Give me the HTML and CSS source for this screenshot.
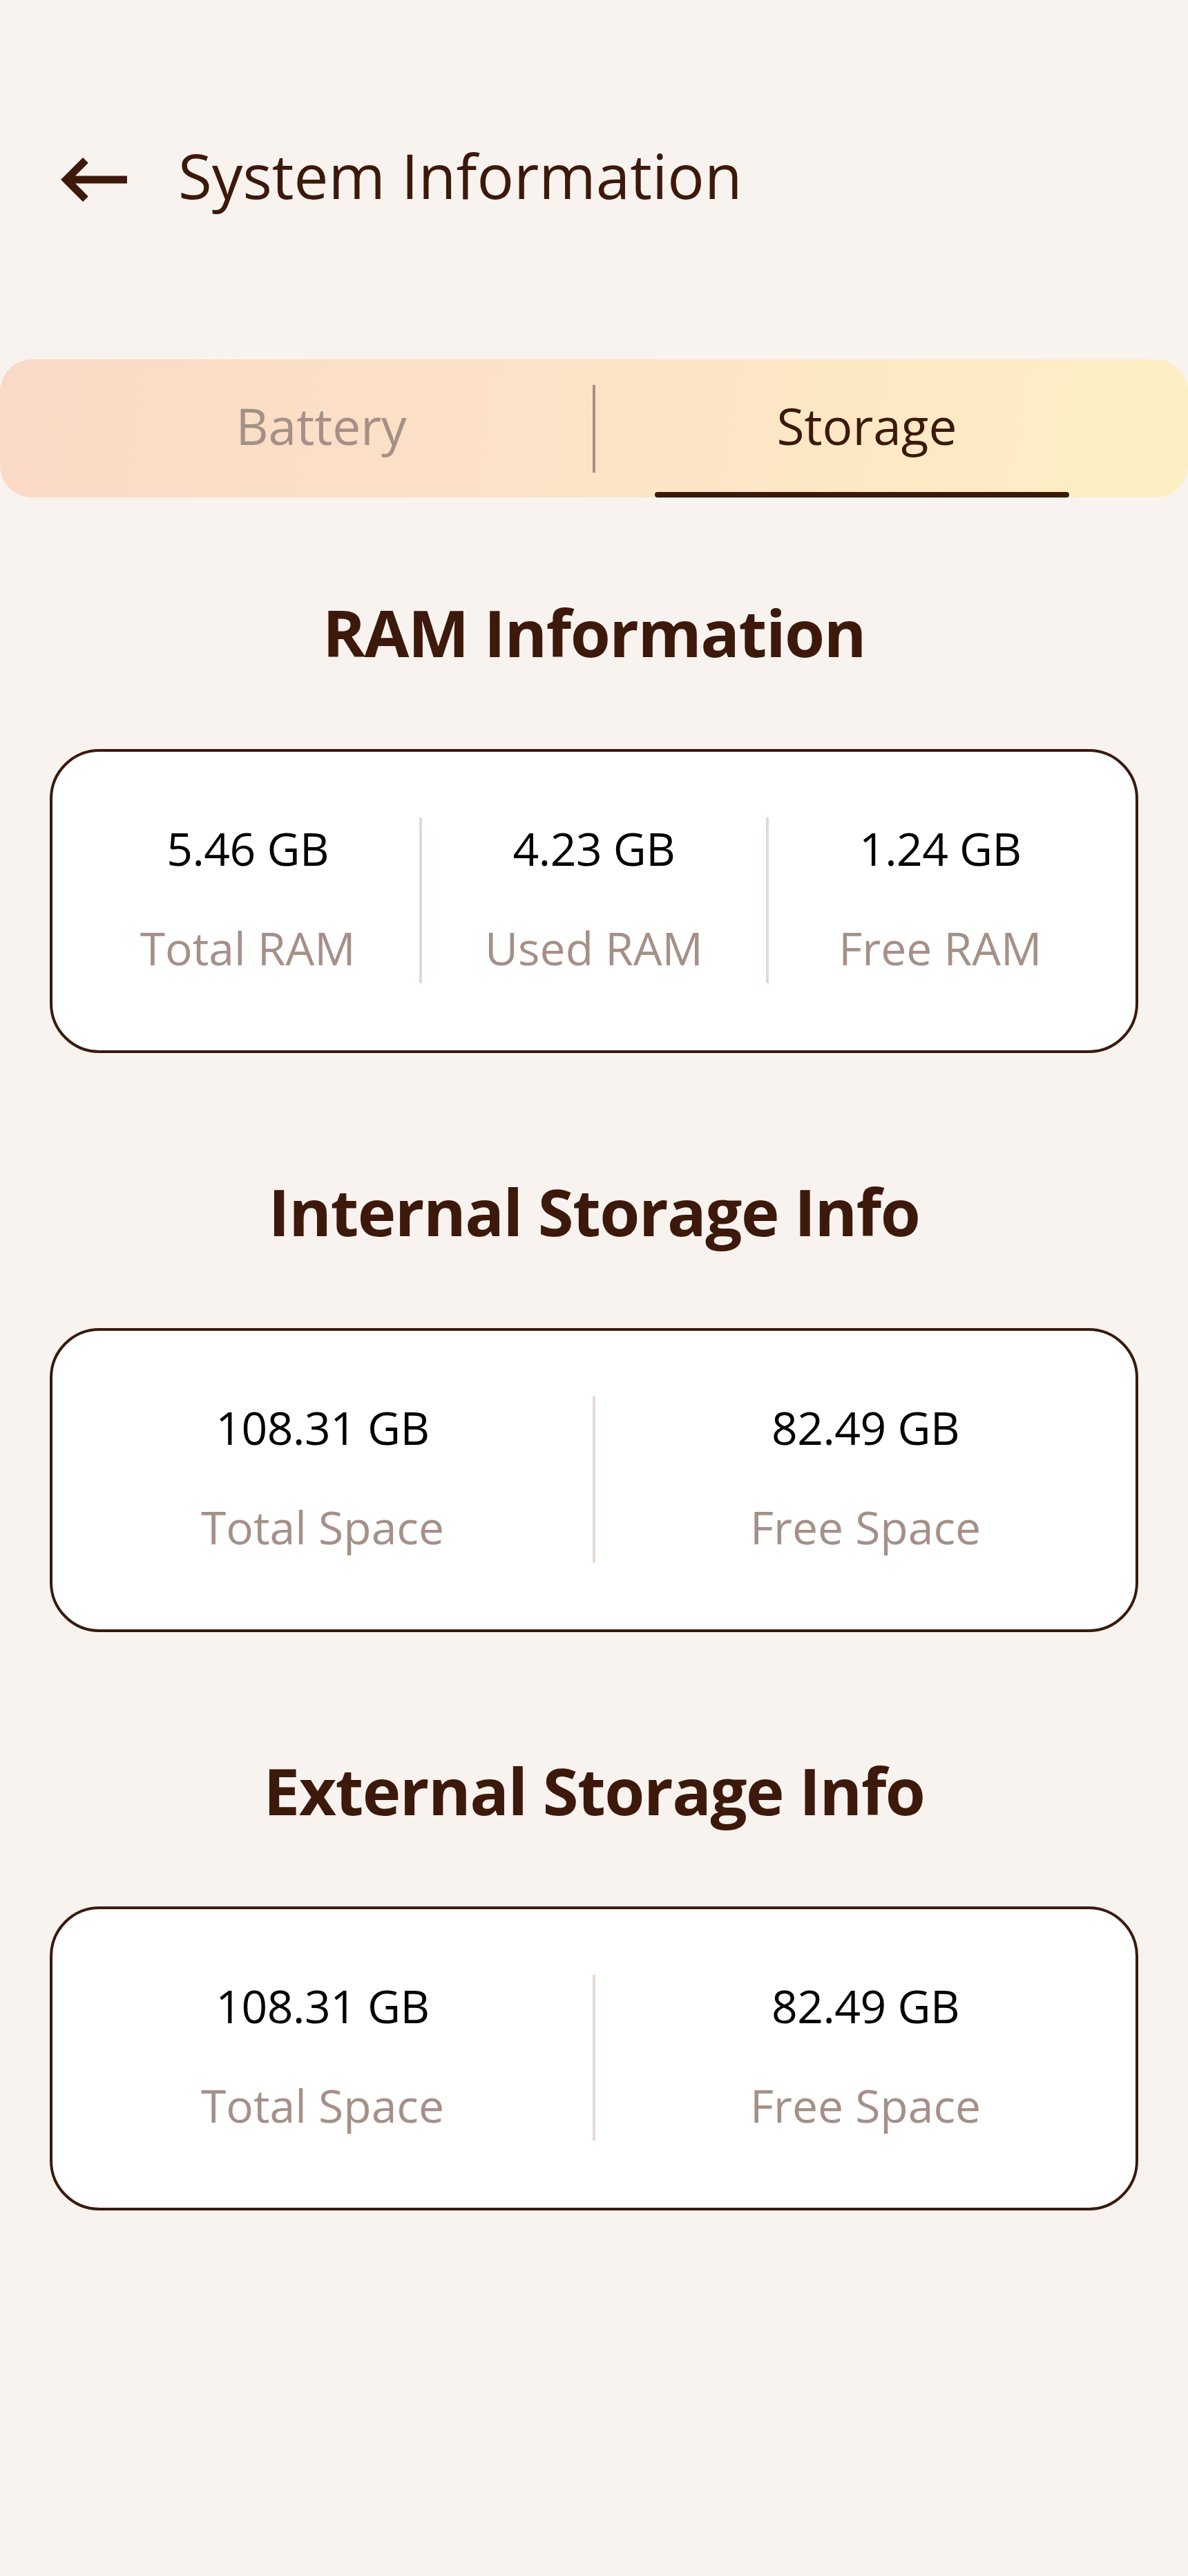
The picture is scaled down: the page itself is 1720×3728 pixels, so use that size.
FILE: index.html
```html
<!DOCTYPE html>
<html lang="en">
<head>
<meta charset="utf-8">
<title>System Information</title>
<link rel="stylesheet" href="styles.css">
</head>
<body>
<header class="app-bar">
  <svg class="back" viewBox="0 0 96 64" width="96" height="64" aria-hidden="true">
    <path d="M12 32H96" stroke="#3C190A" stroke-width="11" fill="none"/>
    <polyline points="35.9,3.9 7.8,32 35.9,60.1" stroke="#3C190A" stroke-width="11" fill="none" stroke-linejoin="miter" stroke-linecap="butt"/>
  </svg>
  <h1 class="app-title">System Information</h1>
</header>

<nav class="tabs">
  <div class="tab">Battery</div>
  <span class="tab-divider"></span>
  <div class="tab active">Storage<span class="indicator"></span></div>
</nav>

<main class="content">
  <section class="section first">
    <h2 class="section-title">RAM Information</h2>
    <div class="card three">
      <div class="stats">
        <div class="stat"><div class="value">5.46 GB</div><div class="label">Total RAM</div></div>
        <div class="stat"><div class="value">4.23 GB</div><div class="label">Used RAM</div></div>
        <div class="stat"><div class="value">1.24 GB</div><div class="label">Free RAM</div></div>
      </div>
    </div>
  </section>

  <section class="section">
    <h2 class="section-title">Internal Storage Info</h2>
    <div class="card two">
      <div class="stats">
        <div class="stat"><div class="value">108.31 GB</div><div class="label">Total Space</div></div>
        <div class="stat"><div class="value">82.49 GB</div><div class="label">Free Space</div></div>
      </div>
    </div>
  </section>

  <section class="section">
    <h2 class="section-title">External Storage Info</h2>
    <div class="card two">
      <div class="stats">
        <div class="stat"><div class="value">108.31 GB</div><div class="label">Total Space</div></div>
        <div class="stat"><div class="value">82.49 GB</div><div class="label">Free Space</div></div>
      </div>
    </div>
  </section>
</main>
</body>
</html>
```

FILE: styles.css
```css
html {
  background: #F8F3EF;
}

body {
  margin: 0;
  min-height: 3728px;
  background: #F8F3EF;
  font-family: "Open Sans", "Noto Sans", "DejaVu Sans", sans-serif;
  color: #3C190A;
}

.app-bar {
  display: flex;
  align-items: center;
  height: 160px;
  margin-top: 180px;
  padding-left: 88px;
  gap: 74px;
}

.back {
  display: block;
  flex: none;
}

.app-title {
  margin: 0 0 12px 0;
  font-size: 89px;
  font-weight: 400;
  line-height: 90px;
  color: #3C190A;
}

.tabs {
  display: flex;
  align-items: stretch;
  height: 200px;
  margin-top: 180px;
  padding: 0 72px;
  border-radius: 47px;
  background: linear-gradient(100deg, #FAD9C6 0%, #FCE3C6 50%, #FDEFC4 100%);
}

.tab {
  position: relative;
  flex: 1;
  display: flex;
  align-items: center;
  justify-content: center;
  padding-bottom: 10px;
  font-size: 73px;
  color: #A59087;
}

.tab.active {
  color: #3C190A;
}

.tab-divider {
  align-self: center;
  width: 4px;
  height: 127px;
  background: #A59087;
}

.indicator {
  position: absolute;
  left: 86px;
  bottom: 0;
  width: 600px;
  height: 8px;
  border-radius: 4px;
  background: #3C190A;
}

.content {
  padding: 0 72px;
}

.section {
  margin-top: 173px;
}

.section.first {
  margin-top: 139px;
}

.section-title {
  margin: 0;
  text-align: center;
  font-size: 94px;
  font-weight: 700;
  line-height: 1.2;
  letter-spacing: -1.5px;
  color: #3C190A;
}

.card {
  margin-top: 112px;
  background: #FFFFFF;
  border: 4px solid #3A1A0C;
  border-radius: 72px;
  padding: 95px 34px 97px;
}

.card.two {
  padding-left: 0;
  padding-right: 0;
}

.stats {
  display: flex;
  height: 240px;
}

.stat {
  flex: 1;
  display: flex;
  flex-direction: column;
  align-items: center;
}

.stat + .stat {
  border-left: 4px solid #E3D9D3;
}

.value {
  font-size: 66px;
  line-height: 88px;
  letter-spacing: -0.5px;
  color: #000000;
}

.label {
  margin-top: 56px;
  font-size: 66px;
  line-height: 88px;
  color: #A59087;
}
```
